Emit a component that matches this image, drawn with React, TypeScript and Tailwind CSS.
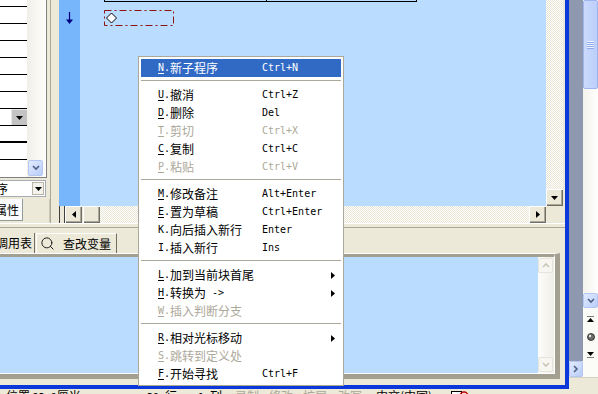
import React from 'react';
import { Search } from 'lucide-react';

const LAT = "font-['DejaVu_Sans_Mono',monospace] text-[10px] leading-[12px]";
const ZH = "font-['Noto_Sans_CJK_SC',sans-serif] text-[12px] leading-[12px]";
const BTN = 'bg-[#ece9d8] shadow-[inset_1px_1px_#fff,inset_-1px_-1px_#716f64,inset_-2px_-2px_#aca899]';
const HATCH = 'bg-[repeating-conic-gradient(#ffffff_0_25%,#e9e6d6_0_50%)] bg-[length:2px_2px]';
const XPBTN = 'rounded-[2px] border border-[#b4c7f3] bg-gradient-to-br from-[#e3ebfe] to-[#b9cdfa] flex items-center justify-center';
const OFFBTN = 'rounded-[2px] border border-[#e6e4da] bg-[#f7f6f1] flex items-center justify-center';

type Item =
  | 'sep'
  | { k: string; u?: boolean; zh: string; tail?: string; sc?: string; sub?: boolean; off?: boolean; on?: boolean };

const MENU: Item[] = [
  { k: 'N', u: true, zh: '新子程序', sc: 'Ctrl+N', on: true },
  'sep',
  { k: 'U', u: true, zh: '撤消', sc: 'Ctrl+Z' },
  { k: 'D', u: true, zh: '删除', sc: 'Del' },
  { k: 'T', u: true, zh: '剪切', sc: 'Ctrl+X', off: true },
  { k: 'C', u: true, zh: '复制', sc: 'Ctrl+C' },
  { k: 'P', u: true, zh: '粘贴', sc: 'Ctrl+V', off: true },
  'sep',
  { k: 'M', u: true, zh: '修改备注', sc: 'Alt+Enter' },
  { k: 'E', u: true, zh: '置为草稿', sc: 'Ctrl+Enter' },
  { k: 'K', zh: '向后插入新行', sc: 'Enter' },
  { k: 'I', zh: '插入新行', sc: 'Ins' },
  'sep',
  { k: 'L', u: true, zh: '加到当前块首尾', sub: true },
  { k: 'H', u: true, zh: '转换为', tail: ' ->', sub: true },
  { k: 'W', u: true, zh: '插入判断分支', off: true },
  'sep',
  { k: 'R', u: true, zh: '相对光标移动', sub: true },
  { k: 'S', u: true, zh: '跳转到定义处', off: true },
  { k: 'F', u: true, zh: '开始寻找', sc: 'Ctrl+F' },
];

function Tri({ dir = 'down', c = '#000' }: { dir?: 'down' | 'left' | 'right'; c?: string }) {
  if (dir === 'left') return <svg width="4" height="7" viewBox="0 0 4 7"><path d="M4 0L0 3.5L4 7z" fill={c} /></svg>;
  if (dir === 'right') return <svg width="4" height="7" viewBox="0 0 4 7"><path d="M0 0L4 3.5L0 7z" fill={c} /></svg>;
  return <svg width="7" height="4" viewBox="0 0 7 4"><path d="M0 0h7L3.5 4z" fill={c} /></svg>;
}

function Chev({ dir = 'down', c = '#4d6185' }: { dir?: 'down' | 'up' | 'right'; c?: string }) {
  const d = dir === 'up' ? 'M1 5l3-3 3 3' : dir === 'right' ? 'M2 1l3 3-3 3' : 'M1 2l3 3 3-3';
  return (
    <svg width="8" height="8" viewBox="0 0 8 8">
      <path d={d} stroke={c} strokeWidth="1.6" fill="none" />
    </svg>
  );
}

function Menu() {
  return (
    <div className="absolute left-[138px] top-[56px] w-[206px] bg-white border border-[#aca899] p-[2px]">
      {MENU.map((it, i) =>
        it === 'sep' ? (
          <div key={i} className="h-[9px] pt-[3px]">
            <div className="h-px bg-[#aca899]" />
          </div>
        ) : (
          <div
            key={i}
            className={`flex items-center h-[18px] pl-[17px] pr-[6px] ${
              it.on ? 'bg-[#316ac5] text-white' : it.off ? 'text-[#aca899]' : 'text-black'
            }`}
          >
            <div className="w-[104px] flex items-center whitespace-nowrap">
              <span className={LAT}>
                <span className={it.u ? 'underline underline-offset-[2px]' : ''}>{it.k}</span>.
              </span>
              <span className={ZH}>{it.zh}</span>
              {it.tail && <span className={`${LAT} whitespace-pre`}>{it.tail}</span>}
            </div>
            {it.sc && <span className={LAT}>{it.sc}</span>}
            {it.sub && (
              <svg className="ml-auto" width="4" height="7" viewBox="0 0 4 7">
                <path d="M0 0L4 3.5L0 7z" fill="currentColor" />
              </svg>
            )}
          </div>
        )
      )}
    </div>
  );
}

function LeftPanel() {
  return (
    <div className="w-[50px] flex flex-col">
      <div className="w-[47px] h-[178px] flex border-r border-b border-[#808080]">
        <div className="w-[27px] bg-white overflow-hidden">
          <div className="-mt-[10px]">
            {Array.from({ length: 10 }).map((_, i) => (
              <div key={i} className={`h-[17px] flex border-black ${i === 8 ? 'border-b-2' : 'border-b'}`}>
                {i === 7 && (
                  <div className="ml-auto w-[16px] h-full bg-[#c3c3c3] border-t border-l border-[#e8e8e8] flex items-center justify-center">
                    <Tri />
                  </div>
                )}
              </div>
            ))}
          </div>
        </div>
        <div className="w-[19px] bg-gradient-to-r from-[#f1efe8] to-[#fdfdfb] flex flex-col justify-end pl-[1px] pb-[1px]">
          <div className={`w-[15px] h-[16px] ${XPBTN}`}>
            <Chev />
          </div>
        </div>
      </div>
      <div className="mt-[2px] w-[46px] h-[17px] bg-white border-t border-r border-b border-[#a5acb5] flex items-center overflow-hidden">
        <span className={`${ZH} -ml-[16px] whitespace-nowrap`}>程序</span>
        <div className="ml-auto mr-[1px] w-[12px] h-[13px] bg-[#f3f2ec] border border-[#b8b5a6] flex items-center justify-center">
          <Tri />
        </div>
      </div>
      <div className="mt-[2px] h-[23px] flex border-r border-[#c9c6b7]">
        <div className="w-[23px] h-[22px] bg-[#fcfcfe] border-r border-b border-[#919b9c] flex items-center overflow-hidden">
          <span className={`${ZH} -ml-[5px] whitespace-nowrap`}>属性</span>
        </div>
      </div>
    </div>
  );
}

function Editor() {
  return (
    <div className="w-[504px] flex flex-col">
      <div className="flex h-[206px]">
        <div className="w-[21px] bg-[#77b6fa] pl-[6px] pt-[12px]">
          <svg width="9" height="13" viewBox="0 0 9 13">
            <path d="M4.5 0v9" stroke="#00007f" strokeWidth="1.2" />
            <path d="M1 7.5h7L4.5 12z" fill="#00007f" />
          </svg>
        </div>
        <div className="w-[466px] bg-[#b9dcff]">
          <div className="ml-[24px] w-[313px] h-[2px] border-l border-r border-b border-black flex">
            <div className="w-[162px] h-full border-r border-black" />
          </div>
          <div className="mt-[8px] ml-[24px] w-[70px] h-[16px]">
            <svg width="70" height="16" viewBox="0 0 70 16">
              <rect x="0.5" y="0.5" width="69" height="15" fill="none" stroke="#8e1414" strokeDasharray="7 3 2 3" />
              <path d="M7.5 3L12.5 8L7.5 13L2.5 8z" fill="#fff" stroke="#000" />
            </svg>
          </div>
        </div>
        <div className={`w-[17px] flex flex-col justify-end ${HATCH}`}>
          <div className={`h-[17px] ${BTN} flex items-center justify-center`}>
            <Tri />
          </div>
        </div>
      </div>
      <div className="flex h-[17px]">
        <div className="w-[6px] bg-[#ece9d8] border-l border-r border-[#404040]" />
        <div className={`w-[17px] ${BTN} flex items-center justify-center`}>
          <Tri dir="left" />
        </div>
        <div className={`w-[17px] ml-[1px] ${BTN}`} />
        <div className={`flex-1 ${HATCH}`} />
        <div className={`w-[17px] ${BTN} flex items-center justify-center`}>
          <Tri dir="right" />
        </div>
        <div className="w-[17px] bg-[#ece9d8]" />
      </div>
    </div>
  );
}

function LowerPanel() {
  return (
    <div className="h-[132px]">
      <div className="w-[560px] h-[126px] border-t border-white border-r-[5px] border-b-[5px] border-r-[#a3a091] border-b-[#a3a091]">
        <div className="h-full flex border-t-[3px] border-t-[#a3a091] border-r border-b border-r-white border-b-white">
          <div className="w-[538px] bg-[#b9dcff]" />
          <div className="w-[16px] bg-gradient-to-r from-[#fdfdfc] to-[#efeee7] flex flex-col justify-between py-[1px]">
            <div className={`w-[15px] h-[15px] ${OFFBTN}`}>
              <Chev dir="up" c="#cac7b8" />
            </div>
            <div className={`w-[15px] h-[15px] ${OFFBTN}`}>
              <Chev c="#cac7b8" />
            </div>
          </div>
        </div>
      </div>
    </div>
  );
}

function RightColumn() {
  return (
    <div className="w-[29px] h-[389px] flex">
      <div className="w-[14px] flex flex-col">
        <div className="h-[361px] bg-[#8e99b0]" />
        <div className={`h-[16px] ${XPBTN}`}>
          <Chev dir="right" />
        </div>
        <div className="flex-1 bg-[#ece9d8] border-t border-[#d6d3c4]" />
      </div>
      <div className="w-[15px] flex flex-col bg-[#fafaf7]">
        <div className="h-[89px] rounded-[2px] border border-[#9db4ec] bg-gradient-to-r from-[#cbdafc] to-[#bccffa] flex flex-col items-center justify-center gap-[1px]">
          {[0, 1, 2, 3].map((i) => (
            <div key={i} className="w-[7px] h-px bg-[#eef3ff] shadow-[0_1px_#8faaec]" />
          ))}
        </div>
        <div className="h-[204px] bg-gradient-to-r from-[#f3f2ec] to-[#fefefe]" />
        <div className={`h-[15px] ${XPBTN}`}>
          <Chev />
        </div>
        <div className="h-[53px] flex flex-col items-center pt-[8px] gap-[10px]">
          <svg width="7" height="7" viewBox="0 0 7 7">
            <path d="M0 0h7" stroke="#000" />
            <path d="M3.5 2L7 6H0z" fill="#000" />
          </svg>
          <svg width="8" height="8" viewBox="0 0 8 8">
            <circle cx="4" cy="4" r="3.5" fill="#6d6d6d" stroke="#222" strokeWidth="0.8" />
            <circle cx="3" cy="3" r="1.2" fill="#e8e8e8" />
          </svg>
          <svg width="7" height="7" viewBox="0 0 7 7">
            <path d="M0 7h7" stroke="#000" />
            <path d="M0 1h7L3.5 5z" fill="#000" />
          </svg>
        </div>
        <div className="h-[16px] bg-[#fbfbf8]" />
        <div className="flex-1 bg-[#ece9d8] border-t border-[#d6d3c4]" />
      </div>
    </div>
  );
}

function StatusBar() {
  const g = 'text-[#aca899]';
  return (
    <div className={`h-[20px] bg-[#ece9d8] relative flex items-start pt-[1px] ${ZH}`}>
      <span className="ml-[6px] w-[141px] whitespace-nowrap">
        位置 <span className={LAT}>23.9</span>厘米
      </span>
      <span className="w-[51px] whitespace-nowrap">
        <span className={LAT}>39 </span>行
      </span>
      <span className="w-[37px] whitespace-nowrap">
        <span className={LAT}>1 </span>列
      </span>
      <span className={`w-[34px] ${g}`}>录制</span>
      <span className={`w-[34px] ${g}`}>修改</span>
      <span className={`w-[35px] ${g}`}>扩展</span>
      <span className={`w-[38px] ${g}`}>改写</span>
      <span className="w-[74px] whitespace-nowrap">中文(中国)</span>
      <svg width="20" height="12" viewBox="0 0 20 12">
        <rect x="1.5" y="1.5" width="10" height="9" fill="#fff" stroke="#000" />
        <circle cx="14" cy="6" r="4" fill="none" stroke="#c00000" strokeWidth="1.5" />
      </svg>
    </div>
  );
}

export default function App() {
  return (
    <div className="w-[598px] h-[394px] overflow-hidden relative bg-[#ece9d8] text-black">
      <div className="flex h-[389px]">
        <div className="w-[569px] h-[389px] border-r-4 border-b-4 border-[#0b38da] flex flex-col">
          <div className="flex h-[223px]">
            <LeftPanel />
            <div className="w-[9px] border-l border-[#aca899]" />
            <Editor />
            <div className="w-[2px]" />
          </div>
          <div className="h-[30px] flex items-end shadow-[inset_0_1px_#fff,inset_0_4px_#ece9d8,inset_0_5px_#aca899]">
            <div className="w-[35px] h-[20px] border-r border-[#716f64] flex items-center overflow-hidden">
              <span className={`${ZH} -ml-[4px] whitespace-nowrap`}>调用表</span>
            </div>
            <div className="ml-[1px] w-[81px] h-[20px] border-l border-t border-white border-r border-r-[#716f64] flex items-center pl-[3px] gap-[8px]">
              <Search size={15} strokeWidth={1.6} color="#222" />
              <span className={ZH}>查改变量</span>
            </div>
          </div>
          <LowerPanel />
        </div>
        <RightColumn />
      </div>
      <StatusBar />
      <Menu />
    </div>
  );
}
